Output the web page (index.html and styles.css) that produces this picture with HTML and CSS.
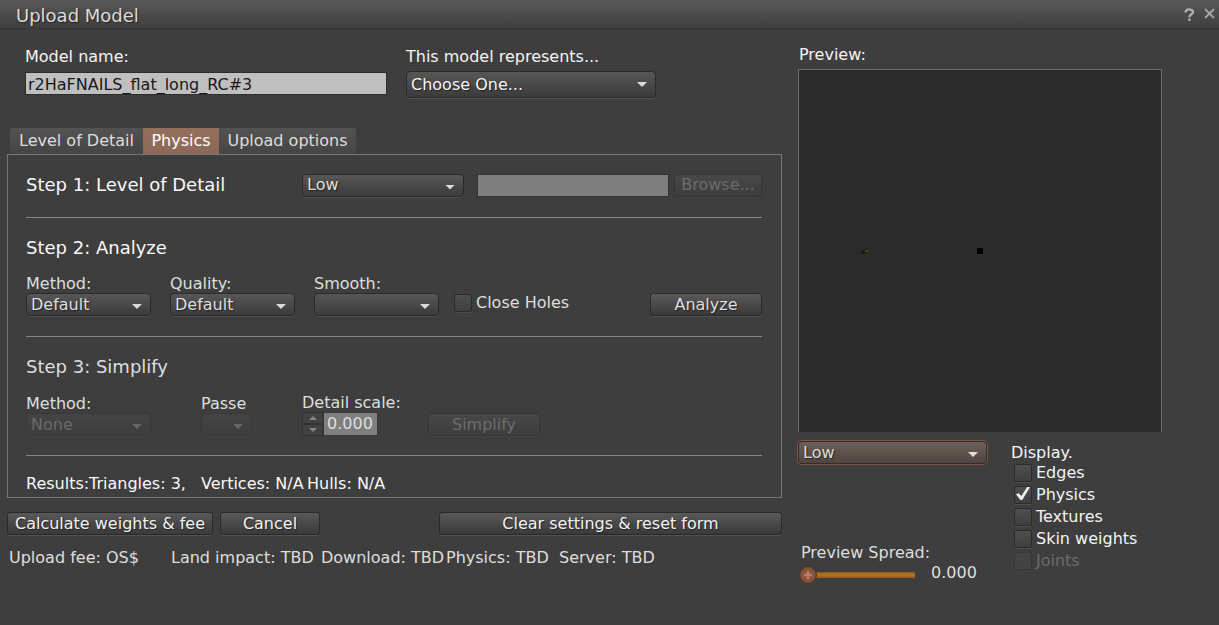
FILE: index.html
```html
<!DOCTYPE html>
<html lang="en">
<head>
<meta charset="utf-8">
<title>Upload Model</title>
<link rel="stylesheet" href="styles.css">
</head>
<body>
<header class="titlebar">
  <h1 class="title">Upload Model</h1>
  <button class="title-btn" type="button" aria-label="Help">
    <svg width="11" height="14" viewBox="0 0 11 14"><path d="M1.500 4.500C1.500 .6 9 .4 9 4C9 6.300 5.400 6.200 5.400 9.200M5.400 10.500V13" fill="none" stroke="#b0b0b0" stroke-width="2.300"/></svg>
  </button>
  <button class="title-btn" type="button" aria-label="Close">
    <svg width="11" height="11" viewBox="0 0 11 11"><path d="M1 1L10 10M10 1L1 10" fill="none" stroke="#a6a6a6" stroke-width="1.800"/></svg>
  </button>
</header>

<main class="layout">
  <section class="settings">
    <div class="model-row">
      <div class="field model-name">
        <label for="name">Model name:</label>
        <input class="text-input" id="name" type="text" value="r2HaFNAILS_flat_long_RC#3">
      </div>
      <div class="field model-kind">
        <label for="kind">This model represents...</label>
        <span class="select tall bright"><select id="kind"><option>Choose One...</option></select></span>
      </div>
    </div>

    <nav class="tabs">
      <button class="tab" type="button">Level of Detail</button>
      <button class="tab active" type="button">Physics</button>
      <button class="tab" type="button">Upload options</button>
    </nav>

    <div class="panel">
      <div class="step step-one">
        <h2 class="step-title">Step 1: Level of Detail</h2>
        <span class="select lod"><select aria-label="Level of detail"><option>Low</option></select></span>
        <input class="text-input file" type="text" aria-label="Physics file" disabled>
        <button class="btn browse" type="button" disabled>Browse...</button>
      </div>

      <div class="step">
        <h2 class="step-title">Step 2: Analyze</h2>
        <div class="controls analyze">
          <div class="field">
            <label for="method">Method:</label>
            <span class="select"><select id="method"><option>Default</option></select></span>
          </div>
          <div class="field">
            <label for="quality">Quality:</label>
            <span class="select"><select id="quality"><option>Default</option></select></span>
          </div>
          <div class="field">
            <label for="smooth">Smooth:</label>
            <span class="select"><select id="smooth"><option></option></select></span>
          </div>
          <label class="check"><input type="checkbox">Close Holes</label>
          <button class="btn medium" type="button">Analyze</button>
        </div>
      </div>

      <div class="step">
        <h2 class="step-title dim">Step 3: Simplify</h2>
        <div class="controls simplify">
          <div class="field">
            <label for="smethod">Method:</label>
            <span class="select off"><select id="smethod" disabled><option>None</option></select></span>
          </div>
          <div class="field">
            <label for="passes">Passe</label>
            <span class="select off"><select id="passes" disabled><option></option></select></span>
          </div>
          <div class="field">
            <label for="scale">Detail scale:</label>
            <div class="spinner">
              <div class="arrows">
                <button class="arrow" type="button" aria-label="Increase" disabled><svg width="8" height="4" viewBox="0 0 8 4"><path d="M0 4L4 0L8 4Z" fill="#858585"/></svg></button>
                <button class="arrow" type="button" aria-label="Decrease" disabled><svg width="8" height="4" viewBox="0 0 8 4"><path d="M0 0L4 4L8 0Z" fill="#858585"/></svg></button>
              </div>
              <input class="number" id="scale" type="text" value="0.000" disabled>
            </div>
          </div>
          <button class="btn medium" type="button" disabled>Simplify</button>
        </div>
      </div>

      <div class="results">
        <span>Results:</span><span>Triangles: 3,</span><span>Vertices: N/A</span><span>Hulls: N/A</span>
      </div>
    </div>

    <div class="actions">
      <button class="btn bright calculate" type="button">Calculate weights &amp; fee</button>
      <button class="btn bright cancel" type="button">Cancel</button>
      <button class="btn bright reset" type="button">Clear settings &amp; reset form</button>
    </div>

    <div class="fees">
      <span>Upload fee: OS$</span><span>Land impact: TBD</span><span>Download: TBD</span><span>Physics: TBD</span><span>Server: TBD</span>
    </div>
  </section>

  <aside class="preview">
    <h2 class="preview-title">Preview:</h2>
    <svg class="viewport" viewBox="0 0 362 362">
      <path d="M61 183L66 179H69V182L64 184Z" fill="#151a12"/>
      <path d="M66 180H69V182H66Z" fill="#4b4b12"/>
      <path d="M178 178H184V184H178Z" fill="#000"/>
    </svg>
    <div class="preview-options">
      <div class="preview-left">
        <span class="select focus"><select aria-label="Preview level of detail"><option>Low</option></select></span>
        <div class="spread">
          <label for="spread">Preview Spread:</label>
          <div class="spread-row">
            <input class="slider" id="spread" type="range" min="0" max="3" value="0">
            <output for="spread">0.000</output>
          </div>
        </div>
      </div>
      <fieldset class="display">
        <legend>Display.</legend>
        <label class="check"><input type="checkbox">Edges</label>
        <label class="check"><input type="checkbox" checked>Physics</label>
        <label class="check"><input type="checkbox">Textures</label>
        <label class="check"><input type="checkbox">Skin weights</label>
        <label class="check off"><input type="checkbox" disabled>Joints</label>
      </fieldset>
    </div>
  </aside>
</main>
</body>
</html>
```

FILE: styles.css
```css
* {
  box-sizing: border-box;
}

body {
  margin: 0;
  min-height: 100vh;
  background: #3e3e3e;
  color: #dedede;
  font: 16px/20px "DejaVu Sans", sans-serif;
  white-space: nowrap;
}

button,
input,
select {
  margin: 0;
  font: inherit;
  color: inherit;
}

h1,
h2 {
  margin: 0;
  font-weight: normal;
}

/* Title bar */
.titlebar {
  display: flex;
  align-items: center;
  height: 29px;
  padding: 4px 0 0 16px;
  border-bottom: 1px solid #363636;
  background: linear-gradient(#585858, #3f3f3f);
}

.title {
  flex: 1;
  font-size: 18px;
  line-height: 24px;
  color: #dcdcdc;
  text-shadow: 1px 1px 1px #222;
}

.title-btn {
  display: flex;
  align-items: flex-start;
  justify-content: center;
  width: 20px;
  height: 20px;
  padding: 2px 0 0;
  border: 0;
  background: none;
}

/* Page columns */
.layout {
  display: flex;
  gap: 16px;
  padding: 18px 16px 0 7px;
}

.settings {
  flex: 1;
  min-width: 0;
}

.preview {
  flex: 0 0 405px;
}

.field {
  display: flex;
  flex-direction: column;
}

/* Selects */
.select {
  position: relative;
  display: block;
}

.select select {
  appearance: none;
  display: block;
  width: 100%;
  height: 23px;
  padding: 0 4px;
  border: 1px solid #2a2a2a;
  border-radius: 4px;
  background: linear-gradient(#575757, #3b3b3b);
  box-shadow: 0 1px 0 #505050;
  line-height: 20px;
  text-shadow: 1px 1px 1px #222;
}

.select::after {
  content: "";
  position: absolute;
  right: 9px;
  top: 11px;
  width: 10px;
  height: 5px;
  background: #dcdcdc;
  clip-path: polygon(0 0, 100% 0, 50% 100%);
  pointer-events: none;
}

.tall select {
  height: 27px;
}

.bright select {
  color: #f6f6f6;
}

.off select {
  border-color: #393939;
  background: linear-gradient(#444, #3d3d3d);
  box-shadow: 0 1px 0 #424242;
  color: #6a6a6a;
  opacity: 1;
  text-shadow: none;
}

.off.select::after {
  background: #666;
}

.focus select {
  border-color: #352a26;
  background: linear-gradient(#6b5f5a, #51463f);
  box-shadow: 0 0 0 1px #7b5747;
}

/* Text boxes */
.text-input {
  width: 100%;
  height: 23px;
  padding: 1px 0 0 2px;
  border: 1px solid #2c2c2c;
  background: #c0bfc0;
  color: #181818;
}

.text-input:disabled {
  border-color: #333;
  background: #7f7f7f;
}

/* Buttons */
.btn {
  height: 23px;
  padding: 0 6px;
  border: 1px solid #2a2a2a;
  border-radius: 3px;
  background: linear-gradient(#595959, #3a3a3a);
  box-shadow: 0 1px 0 #525252;
  line-height: 20px;
  text-align: center;
  text-shadow: 1px 1px 1px #222;
}

.btn.bright {
  color: #f2f2f2;
}

.btn:disabled {
  border-color: #353535;
  background: linear-gradient(#484848, #3d3d3d);
  box-shadow: 0 1px 0 #434343;
  color: #6c6c6c;
  text-shadow: none;
}

/* Check boxes */
.check {
  display: flex;
  align-items: center;
  gap: 4px;
}

.check input {
  appearance: none;
  position: relative;
  width: 18px;
  height: 18px;
  border: 1px solid #2b2b2b;
  border-radius: 2px;
  background: linear-gradient(#4f4f4f, #3f3f3f);
  box-shadow: 0 1px 0 #4c4c4c;
}

.check input:checked::after {
  content: "";
  position: absolute;
  left: 1px;
  top: 0;
  width: 14px;
  height: 13px;
  background: #eee;
  clip-path: polygon(0 55%, 20% 48%, 38% 70%, 80% 0, 100% 0, 45% 100%, 32% 100%);
}

.check.off {
  color: #6c6c6c;
}

.check.off input {
  border-color: #363636;
  background: #434343;
  box-shadow: none;
}

/* Model name and kind */
.model-row {
  display: flex;
  gap: 19px;
  padding-left: 18px;
  color: #f4f4f4;
}

.model-name {
  width: 362px;
  gap: 5px;
}

.model-kind {
  width: 250px;
  gap: 4px;
}

/* Tabs */
.tabs {
  display: flex;
  padding: 30px 0 0 3px;
}

.tab {
  width: 137px;
  height: 26px;
  padding: 0;
  border: 0;
  background: linear-gradient(#535353, #454545);
}

.tab:first-child {
  width: 133px;
  border-radius: 3px 0 0 0;
}

.tab:last-child {
  border-radius: 0 3px 0 0;
}

.tab.active {
  width: 76px;
  background: linear-gradient(#946f5e, #8b6857);
  color: #fff;
}

.panel {
  padding: 0 19px 3px 18px;
  border: 1px solid #777;
}

.step {
  height: 119px;
  padding-top: 20px;
  border-bottom: 1px solid #868686;
}

.step-title {
  font-size: 18px;
  color: #f8f8f8;
}

.step-title.dim {
  color: #dedede;
}

.step-one {
  display: flex;
  align-items: center;
  height: 63px;
  padding: 0 0 2px;
}

.step-one .step-title {
  flex: 1;
}

.lod {
  width: 162px;
  margin-right: 13px;
}

.file {
  width: 192px;
  margin-right: 5px;
}

.browse {
  width: 88px;
}

.controls {
  display: grid;
  align-items: end;
  padding-top: 16px;
}

.controls .field label {
  line-height: 19px;
}

.analyze {
  grid-template-columns: 125px 125px 125px 1fr 112px;
  column-gap: 19px;
}

.analyze .check {
  margin-left: -4px;
  padding-bottom: 3px;
}

.simplify {
  grid-template-columns: 125px 51px 76px 112px;
  column-gap: 50px;
}

/* Spinner */
.spinner {
  display: flex;
  height: 24px;
}

.arrows {
  display: grid;
  flex: 0 0 21px;
}

.arrow {
  display: flex;
  align-items: center;
  justify-content: center;
  padding: 0;
  border: 1px solid #333;
  border-radius: 2px;
  background: #424242;
}

.number {
  width: 55px;
  min-width: 0;
  padding: 0 3px;
  border: 1px solid #383838;
  background: #7f7f7f;
  color: #dedede;
}

/* Results, actions and fees */
.results {
  display: grid;
  grid-template-columns: 63px 112px 106px 1fr;
  padding-top: 18px;
  color: #f8f8f8;
}

.actions {
  display: flex;
  gap: 7px;
  margin-top: 14px;
}

.calculate {
  width: 206px;
}

.cancel {
  width: 100px;
}

.reset {
  width: 343px;
  margin-left: auto;
}

.fees {
  display: grid;
  grid-template-columns: 162px 150px 125px 113px 1fr;
  padding: 13px 0 0 2px;
}

/* Preview column */
.preview-title {
  margin: -2px 0 4px 1px;
  font-size: 16px;
  color: #f4f4f4;
}

.viewport {
  display: block;
  width: 364px;
  max-width: 100%;
  border: 1px solid #6d6d6d;
  border-bottom: 0;
  background: #2b2b2b;
}

.preview-options {
  display: flex;
  gap: 24px;
  padding-top: 9px;
}

.preview-left {
  width: 189px;
}

.spread {
  padding: 79px 0 0 3px;
}

.spread-row {
  display: flex;
  gap: 14px;
}

.slider {
  appearance: none;
  width: 118px;
  height: 18px;
  margin: 3px 0 0 -2px;
  background: linear-gradient(#8a5a24, #b8761c, #8a5a24) center / 114px 6px no-repeat;
}

.slider::-webkit-slider-thumb {
  appearance: none;
  width: 18px;
  height: 18px;
  border: 1px solid #4a3429;
  border-radius: 50%;
  background:
    linear-gradient(#b98062, #b98062) center / 8px 2px no-repeat,
    linear-gradient(#b98062, #b98062) center / 2px 8px no-repeat,
    radial-gradient(#a0644a, #6b4430);
}

.display {
  margin: 0;
  padding: 0;
  border: 0;
  color: #f4f4f4;
}

.display legend {
  padding: 3px 0 0;
  line-height: 18px;
}

.display .check {
  height: 22px;
  padding-left: 3px;
}
```
